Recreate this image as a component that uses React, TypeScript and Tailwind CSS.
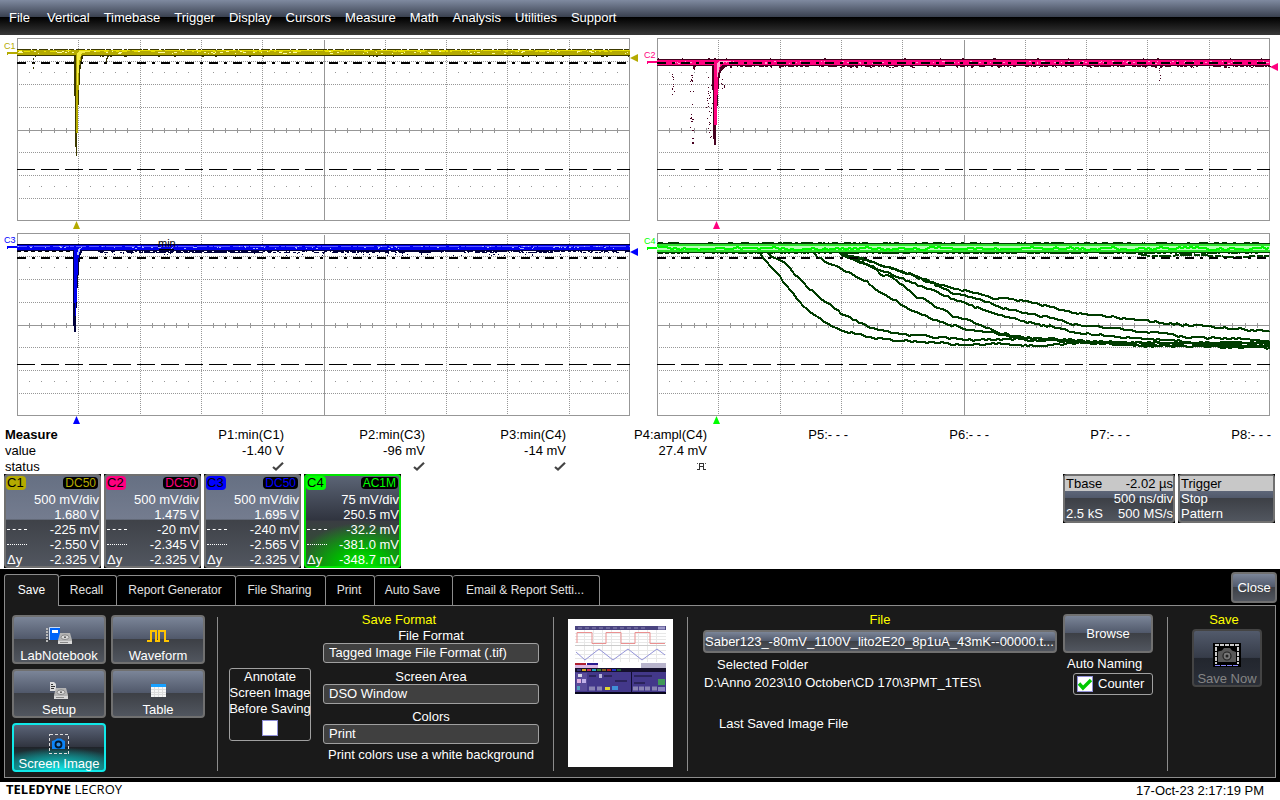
import React from "react";

const MENU = ["File", "Vertical", "Timebase", "Trigger", "Display", "Cursors", "Measure", "Math", "Analysis", "Utilities", "Support"];

const BEVEL =
  "border-2 border-[#707070] rounded-[4px] bg-[linear-gradient(#7b8598,#50586a_49%,#3d4046_50%,#51565f)]";

function rng(seed: number) {
  let s = seed;
  return () => {
    s = (s * 16807) % 2147483647;
    return s / 2147483647;
  };
}

/* Scattered one-row pixels between two rows, as one path */
function specks(seed: number, x0: number, x1: number, y0: number, y1: number, n: number, len = 2) {
  const r = rng(seed);
  let d = "";
  for (let i = 0; i < n; i++) {
    const x = Math.round(x0 + r() * (x1 - x0));
    const y = Math.round(y0 + r() * (y1 - y0));
    const w = 1 + Math.floor(r() * len);
    d += `M${x} ${y}h${w}v1h-${w}z`;
  }
  return d;
}

/* Digitised line through the given points, with one-pixel noise */
function noisy(seed: number, pts: number[][], amp: number) {
  const r = rng(seed);
  let d = "";
  for (let i = 0; i < pts.length - 1; i++) {
    const [ax, ay] = pts[i];
    const [bx, by] = pts[i + 1];
    const n = Math.max(1, Math.round((bx - ax) / 3));
    for (let k = 0; k < n; k++) {
      const t = k / n;
      const x = Math.round(ax + (bx - ax) * t);
      const y = Math.round(ay + (by - ay) * t + (r() - 0.5) * amp);
      d += `${d ? "L" : "M"}${x} ${y}`;
    }
  }
  const [lx, ly] = pts[pts.length - 1];
  return `${d}L${lx} ${ly}`;
}

const third = (pts: number[][]) => pts.map(([x, y]) => [x / 3, y / 3 - 5]);

const DECAYS = [
  [[360, 88], [400, 130], [440, 180], [470, 220], [510, 262], [560, 295], [600, 315], [680, 335], [760, 346], [880, 352], [970, 360], [1060, 357], [1200, 363], [1320, 352], [1500, 362], [1889, 366]],
  [[385, 86], [440, 120], [500, 185], [560, 235], [620, 275], [700, 310], [780, 327], [900, 338], [1000, 345], [1120, 342], [1250, 348], [1450, 355], [1889, 352]],
  [[525, 90], [560, 112], [600, 130], [680, 170], [740, 215], [820, 258], [900, 290], [980, 313], [1060, 325], [1150, 340], [1300, 345], [1500, 360], [1889, 368]],
  [[600, 86], [660, 110], [700, 130], [730, 152], [750, 153], [790, 183], [830, 216], [850, 218], [885, 248], [905, 250], [940, 275], [970, 282], [1020, 298], [1080, 325], [1140, 335], [1300, 350], [1600, 354], [1889, 356]],
  [[600, 86], [680, 118], [780, 158], [880, 197], [960, 230], [1040, 258], [1160, 292], [1240, 305], [1300, 322], [1400, 330], [1500, 342], [1590, 343], [1700, 362], [1889, 361]],
  [[610, 88], [700, 112], [800, 145], [880, 175], [940, 205], [1020, 222], [1080, 248], [1150, 262], [1240, 280], [1300, 298], [1420, 308], [1500, 320], [1560, 322], [1640, 338], [1780, 340], [1889, 350]],
  [[600, 86], [720, 118], [820, 150], [900, 180], [1020, 208], [1060, 218], [1100, 222], [1170, 230], [1260, 255], [1330, 268], [1400, 272], [1470, 285], [1540, 290], [1620, 298], [1700, 305], [1800, 312], [1889, 320]],
].map(third);

const VX = [78, 140, 201, 262, 324, 385, 446, 507, 569];
const HY = [26, 49, 72, 117, 140, 163];
const TX = Array.from({ length: 49 }, (_, i) => i + 1)
  .filter((i) => i % 5 !== 0)
  .map((i) => Math.round(17 + i * 12.24));

function Graticule() {
  let dots = "";
  let ticks = "";
  for (const x of TX) {
    dots += `M${x} 37h1v1h-1zM${x} 151h1v1h-1z`;
    ticks += `M${x} 93h1v5h-1z`;
  }
  return (
    <g shapeRendering="crispEdges">
      <g stroke="#979797" fill="none">
        {VX.map((x) => (
          <path key={x} d={`M${x + 0.5} 5V185`} strokeDasharray={x === 324 ? undefined : "1 1"} />
        ))}
        {HY.map((y) => (
          <path key={y} d={`M19 ${y + 0.5}H629`} strokeDasharray="1 1" />
        ))}
        <path d="M17 95.500H629" />
        <rect x="17.500" y="3.500" width="612" height="182" />
      </g>
      <path d={dots + ticks} fill="#979797" />
    </g>
  );
}

function CursorLines({ fine }: { fine?: boolean }) {
  return (
    <g stroke="#000" shapeRendering="crispEdges" fill="none">
      <path d="M17 28H630" strokeWidth="2" strokeDasharray="9 6 3 6" />
      <path d="M17 134.500H630" strokeDasharray="18 6" />
      {fine && <path d="M17 21.500H76" strokeDasharray="4 3" />}
    </g>
  );
}

function Scope({
  name,
  color,
  ground,
  level,
  marker,
  cursorsOnTop,
  fine,
  children,
}: {
  name: string;
  color: string;
  ground: number;
  level?: number;
  marker: string;
  cursorsOnTop?: boolean;
  fine?: boolean;
  children: React.ReactNode;
}) {
  return (
    <svg viewBox="0 0 640 195" className="block w-full" role="img" aria-label={`${name} trace`}>
      <Graticule />
      {!cursorsOnTop && <CursorLines fine={fine} />}
      <g shapeRendering="crispEdges">{children}</g>
      {cursorsOnTop && <CursorLines />}
      <text x="4" y={ground - 4} fontSize="9" fill={color}>
        {name}
      </text>
      <path d={`M7 ${ground - 1}h10v2h-9v1h-1z`} fill={color} shapeRendering="crispEdges" />
      <path d="M76.500 186L80 194H73Z" fill={color} />
      {level !== undefined && <path d={`M630 ${level}L638 ${level - 4}V${level + 4}Z`} fill={marker} />}
    </svg>
  );
}

function TraceC1() {
  return (
    <>
      <path d="M17 15h613v6H17z" fill="#b4aa00" />
      <path d="M17 14.500H630" stroke="#3c3900" strokeDasharray="14 1 5 2 9 2 3 1" />
      <path d="M17 20.500H630" stroke="#3c3900" />
      <path d="M79 15.500H630" stroke="#e6dc00" strokeDasharray="30 3 18 2" />
      <path d={specks(5, 18, 628, 16, 18, 90, 3)} fill="#fffb9c" />
      <path d={specks(9, 18, 628, 15, 16, 120, 4)} fill="#e8e000" />
      <path d={specks(11, 100, 628, 21, 21, 26)} fill="#3c3900" />
      <path d="M35 21h1v1h-2v3h-1v-2h1v-1h1zM33 28h1v1h-1zM33 32h1v2h-1zM102 21h2v1h-2zM107 21h1v3h-1v3h-1v-4h1z" fill="#3c3900" />
      <path d="M74 20L75 100V112H76V121H77V110L78.500 70L80 40L81 28L84 20Z" fill="#3c3900" />
      <path d="M76 16V98H77.500L78.500 55L79.500 30L82 19L88 16Z" fill="#b4aa00" />
      <path d="M77 50V18L79 16H92L82 18L79 26L78 50" fill="#f4ec40" />
    </>
  );
}

function TraceC2() {
  return (
    <>
      <path d="M17 25h613v6H17z" fill="#ff007f" />
      <path d="M17 24.500H630M17 30.500H630" stroke="#46001f" />
      <path d={specks(21, 18, 628, 26, 28, 110, 2)} fill="#ff9cce" />
      <path d={specks(22, 90, 628, 31, 31, 190, 3)} fill="#46001f" />
      <path d={specks(26, 90, 628, 32, 32, 30, 2)} fill="#46001f" />
      <path d={specks(23, 18, 628, 23, 23, 18, 2)} fill="#46001f" />
      <path d={specks(24, 50, 53, 34, 108, 22, 2)} fill="#46001f" />
      <path d={specks(25, 32, 34, 34, 60, 10, 1)} fill="#46001f" />
      <path d={specks(27, 66, 74, 34, 102, 34, 1)} fill="#46001f" />
      <path d={specks(28, 81, 85, 34, 54, 8, 1)} fill="#46001f" />
      <path d={specks(29, 519, 521, 33, 48, 6, 1)} fill="#46001f" />
      <path d="M53 31h3l-2 6zM72 30L73.500 104L74 110H76V100L78 62L79 46L81 36L85 32L92 30Z" fill="#46001f" />
      <path d="M74 26V90H76.500L77.500 60L78.500 38L81 31L88 26Z" fill="#ff007f" />
      <path d="M77 42V29L79 26H94L81 28L79 33L78 42Z" fill="#ffa4d2" />
    </>
  );
}

function TraceC3() {
  return (
    <>
      <path d="M17 15h613v5H17z" fill="#0000f0" />
      <path d="M17 14.500H630M17 20.500H630" stroke="#00003c" />
      <path d="M17 16.500H630" stroke="#5a5aff" strokeDasharray="10 2 4 1 16 3" />
      <path d={specks(31, 18, 628, 16, 18, 80, 2)} fill="#a8b4ff" />
      <path d={specks(32, 98, 628, 21, 22, 300, 3)} fill="#00003c" />
      <path d={specks(33, 105, 560, 23, 25, 40, 1)} fill="#00003c" />
      <path d={specks(34, 130, 260, 21, 22, 120, 4)} fill="#00003c" />
      <path d={specks(36, 330, 510, 21, 21, 110, 3)} fill="#00003c" />
      <path d="M72.500 20L73 90L74 102H76V88L77.500 58L79 38L80 26L83 20Z" fill="#00003c" />
      <path d="M74 16V60L75 86H76L77.500 45L78.500 28L81 18Z" fill="#0000f0" />
      <path d="M77 25L78 19L82 17L80 20L79 25Z" fill="#a8b4ff" />
      <path d="M159 19.500H174" stroke="#000" />
      <text x="158" y="17" fontSize="11" fill="#000">
        min
      </text>
    </>
  );
}

function TraceC4() {
  const mid = (seed: number) => {
    const pts: number[][] = [];
    const r = rng(seed);
    for (let x = 17; x <= 628; x += 12) pts.push([x, 18 + r() * 3 - 1]);
    pts.push([629, 18]);
    return noisy(seed + 1, pts, 2);
  };
  return (
    <>
      {DECAYS.map((p, i) => (
        <path key={i} d={noisy(50 + i, p, 2)} stroke="#003c00" strokeWidth="2" fill="none" />
      ))}
      <path d="M498 24L510 26L560 25L590 27L629 26" stroke="#003c00" fill="none" strokeWidth="2" strokeDasharray="12 2 6 1" />
      <path d="M17 13h613v10H17z" fill="#64f864" />
      <path d="M17 17.500H630" stroke="#b4ffb4" strokeWidth="5" />
      <path d="M17 15H630M17 21H630" stroke="#30e030" strokeWidth="2" />
      <path d={mid(71)} stroke="#00fa00" strokeWidth="2" fill="none" />
      <path d="M17 13.500H630M17 22.500H630" stroke="#003c00" />
      <path d={specks(61, 18, 626, 12, 12, 100, 6)} fill="#003c00" />
      <path d={specks(62, 18, 626, 23, 23, 220, 4)} fill="#003c00" />
    </>
  );
}

const MEASURES = [
  ["P1:min(C1)", "-1.40 V", "ok"],
  ["P2:min(C3)", "-96 mV", "ok"],
  ["P3:min(C4)", "-14 mV", "ok"],
  ["P4:ampl(C4)", "27.4 mV", "pulse"],
  ["P5:- - -", "", ""],
  ["P6:- - -", "", ""],
  ["P7:- - -", "", ""],
  ["P8:- - -", "", ""],
];

function StatusIcon({ kind }: { kind: string }) {
  if (kind === "ok")
    return (
      <svg viewBox="0 0 12 10" className="ml-auto block h-[10px] w-3" aria-label="valid">
        <path d="M1 5L4 7.500L11 0.800" fill="none" stroke="#444" strokeWidth="2.200" />
      </svg>
    );
  if (kind === "pulse")
    return (
      <svg viewBox="0 0 11 9" className="ml-auto block h-[9px] w-[11px]" aria-label="pulse">
        <path d="M1 7.500H3.500V1.500H7.500V7.500H10M3 4.500H8" fill="none" stroke="#333" shapeRendering="crispEdges" />
        <path d="M1 1.500H2M9 1.500H10" stroke="#555" />
      </svg>
    );
  return null;
}

function MeasureTable() {
  return (
    <table className="mt-[2px] h-[47px] w-full table-fixed border-collapse leading-4 text-black">
      <thead>
        <tr className="h-4">
          <th className="w-[143px] p-0 pl-[5px] text-left font-bold">Measure</th>
          {MEASURES.map(([n]) => (
            <th key={n} className="p-0 text-right font-normal">
              {n}
            </th>
          ))}
          <th className="w-[9px] p-0" />
        </tr>
      </thead>
      <tbody>
        <tr className="h-4">
          <th className="p-0 pl-[5px] text-left font-normal">value</th>
          {MEASURES.map(([n, v]) => (
            <td key={n} className="p-0 text-right">
              {v}
            </td>
          ))}
          <td />
        </tr>
        <tr className="h-[15px]">
          <th className="p-0 pl-[5px] text-left leading-[15px] font-normal">status</th>
          {MEASURES.map(([n, , s]) => (
            <td key={n} className="p-0">
              <StatusIcon kind={s} />
            </td>
          ))}
          <td />
        </tr>
      </tbody>
    </table>
  );
}

const CHANNELS = [
  { n: "C1", tag: "bg-[#b4aa00]", fg: "text-[#b4aa00]", mode: "DC50", v: ["500 mV/div", "1.680 V", "-225 mV", "-2.550 V", "-2.325 V"] },
  { n: "C2", tag: "bg-[#ff007f]", fg: "text-[#ff007f]", mode: "DC50", v: ["500 mV/div", "1.475 V", "-20 mV", "-2.345 V", "-2.325 V"] },
  { n: "C3", tag: "bg-[#0000ff]", fg: "text-[#0000ff]", mode: "DC50", v: ["500 mV/div", "1.695 V", "-240 mV", "-2.565 V", "-2.325 V"] },
  { n: "C4", tag: "bg-[#00ff00]", fg: "text-[#00ff00]", mode: "AC1M", v: ["75 mV/div", "250.5 mV", "-32.2 mV", "-381.0 mV", "-348.7 mV"] },
];

function Descriptor({ c }: { c: (typeof CHANNELS)[number] }) {
  const active = c.n === "C4";
  return (
    <div className="h-[94px] w-[97px] bg-black">
      <button
        className={
          active
            ? "block h-full w-full rounded-[4px] border-2 border-[#00e600] bg-[radial-gradient(ellipse_70%_48%_at_60%_100%,#00f000,#00b800_40%,transparent),linear-gradient(#5b6475,#30343f_49%,#3a3d42_50%,#2c5a2c)] text-left text-white"
            : "block h-full w-full rounded-[4px] border-2 border-[#707070] bg-[linear-gradient(#667083,#747c8f_48%,#3f4248_49%,#51565f)] text-left text-white"
        }
      >
        <span className="flex h-4 items-start justify-between">
          <span className={`${c.tag} h-[14px] w-5 rounded-sm pl-px text-[13px] leading-[14px] text-black`}>{c.n}</span>
          <span className={`${c.fg} mr-px mt-px h-3 rounded-sm bg-black px-[2px] text-[12px] leading-[12px]`}>{c.mode}</span>
        </span>
        {c.v.map((v, i) => (
          <span key={i} className="flex h-[15px] items-center justify-between whitespace-nowrap pl-px leading-[15px]">
            <span className="flex w-5 items-center">
              {i === 2 && <i className="block w-5 border-t border-dashed border-white" />}
              {i === 3 && <i className="block w-5 border-t border-dotted border-white" />}
              {i === 4 && "Δy"}
            </span>
            <span>{v}</span>
          </span>
        ))}
      </button>
    </div>
  );
}

function StatusBoxes() {
  return (
    <div className="flex gap-[3px] leading-[15px]">
      <div className="h-[49px] w-[112px] bg-black">
        <button className={`${BEVEL} block h-full w-full text-left text-white`}>
          <span className="flex h-[15px] justify-between bg-[#c8c8c8] pl-px text-black">
            <span>Tbase</span>
            <span>-2.02 µs</span>
          </span>
          <span className="block text-right">500 ns/div</span>
          <span className="flex justify-between pl-px">
            <span>2.5 kS</span>
            <span>500 MS/s</span>
          </span>
        </button>
      </div>
      <div className="h-[49px] w-[97px] bg-black">
        <button className={`${BEVEL} block h-full w-full text-left text-white`}>
          <span className="block h-[15px] bg-[#c8c8c8] pl-px text-black">Trigger</span>
          <span className="block pl-px">Stop</span>
          <span className="block pl-px">Pattern</span>
        </button>
      </div>
    </div>
  );
}

function Drive({ x }: { x: number }) {
  return (
    <g transform={`translate(${x} 7)`}>
      <path d="M3 0H13L15 7V11H1V7Z" fill="#b4b4b4" />
      <path d="M1 8H15V11H1Z" fill="#d8d8d8" />
      <ellipse cx="8" cy="4.200" rx="4" ry="2.300" fill="#dcdcdc" stroke="#777" strokeWidth="0.800" />
      <circle cx="8" cy="4.200" r="0.900" fill="#444" />
      <path d="M3 9.500H11" stroke="#888" />
    </g>
  );
}

function NotebookIcon() {
  return (
    <svg viewBox="0 0 28 20" className="h-5 w-7">
      <path d="M2 2V16" stroke="#b8b8b8" strokeWidth="2" strokeDasharray="2 1" />
      <path d="M4 2H15V14H4Z" fill="#0064f8" />
      <path d="M4.500 14V1.500H15" fill="none" stroke="#c8dcf8" />
      <rect x="7" y="4" width="6" height="3" fill="#fff" />
      <Drive x={12} />
    </svg>
  );
}

function SetupIcon() {
  return (
    <svg viewBox="0 0 20 18" className="h-[18px] w-5">
      <path d="M1 1H5L7 3V10H1Z" fill="#dcdcdc" />
      <path d="M2 3.500H4M2 5.500H6M2 7.500H5" stroke="#333" />
      <Drive x={4} />
    </svg>
  );
}

function WaveIcon() {
  return (
    <svg viewBox="0 0 22 14" className="h-[14px] w-[22px]" shapeRendering="crispEdges">
      <path d="M0 12H4V2H9V12H12V2H18V12H22" fill="none" stroke="#ffc400" strokeWidth="2" />
    </svg>
  );
}

function TableIcon() {
  return (
    <svg viewBox="0 0 15 13" className="h-[13px] w-[15px]" shapeRendering="crispEdges">
      <rect width="15" height="13" fill="#f6f6f6" />
      <rect width="15" height="3" fill="#18a0ff" />
      <path d="M0 5.500H15M0 8.500H15M0 10.500H15M3.500 3V13M7.500 3V13M11.500 3V13" stroke="#dcdcdc" />
    </svg>
  );
}

function CameraIcon() {
  return (
    <svg viewBox="0 0 20 20" className="h-5 w-5">
      <rect x="0.500" y="0.500" width="19" height="19" fill="none" stroke="#ddd" strokeDasharray="3 2" shapeRendering="crispEdges" />
      <path d="M3 7L6 6L8 4.500H12L14 6L16 7V15H3Z" fill="#0c84f8" />
      <circle cx="9.500" cy="10.500" r="3" fill="#3090e8" stroke="#001830" strokeWidth="1.800" />
    </svg>
  );
}

function SaveNowIcon() {
  return (
    <svg viewBox="0 0 28 24" className="h-6 w-7">
      <g shapeRendering="crispEdges">
        <rect width="28" height="24" fill="#000" />
        <path d="M2 2H26" stroke="#c8c8c8" strokeWidth="2" strokeDasharray="4 1" />
        <path d="M3 4V21M25 4V21" stroke="#c8c8c8" strokeWidth="2" strokeDasharray="4 1" />
        <path d="M2 22.500H26" stroke="#8888ff" strokeDasharray="5 1" />
      </g>
      <path d="M5 8.500L9 7.500L11 5H17L19 7.500L23 9V19H5Z" fill="#585858" />
      <circle cx="14" cy="13" r="4" fill="#777" stroke="#222" strokeWidth="1.200" />
      <circle cx="14" cy="13" r="1.500" fill="#222" />
    </svg>
  );
}

const SAVE_KINDS = [
  { t: "LabNotebook", icon: <NotebookIcon /> },
  { t: "Waveform", icon: <WaveIcon /> },
  { t: "Setup", icon: <SetupIcon /> },
  { t: "Table", icon: <TableIcon /> },
  { t: "Screen Image", icon: <CameraIcon />, on: true },
];

function Thumbnail() {
  const keys = ["#3c3878", "#d0a820", "#c83050", "#20a0c0", "#408030", "#806020", "#b02020", "#2030c0", "#206030"];
  return (
    <svg viewBox="0 0 91 68" className="block h-[68px] w-[91px]" role="img" aria-label="Preview">
      <rect width="91" height="68" fill="#fff" />
      <rect width="91" height="4" fill="#4a4480" />
      <path d="M3 2H72" stroke="#8a86b4" strokeDasharray="4 3" />
      <rect x="83" y="0.500" width="7" height="3" fill="#9c98c8" />
      <path d="M0 7.500H91M0 10.500H91M0 13.500H91M0 16.500H91M0 24.500H91M0 28.500H91M0 32.500H91M9.500 4V36M18.500 4V36M27.500 4V36M36.500 4V36M45.500 4V36M54.500 4V36M63.500 4V36M72.500 4V36M81.500 4V36" stroke="#e8e8e8" />
      <path d="M0 19.500H91" stroke="#ccc" />
      <path d="M2 17V6.500H17V17.500H31V6.500H46V17.500H60V6.500H75V17.500H90" fill="none" stroke="#eb9090" />
      <path d="M1 26L10 34L24 23L38 34L53 23L67 34L82 23L90 29" fill="none" stroke="#9494d8" />
      <rect y="37" width="11" height="2" fill="#b02030" />
      <rect x="12" y="37" width="11" height="2" fill="#2a1c90" />
      <path d="M0 40.500H23" stroke="#dcb8e4" strokeWidth="3" />
      <rect x="66" y="37" width="25" height="5" fill="#b8b4cc" />
      <rect y="42" width="91" height="26" fill="#43388a" />
      <rect x="56" y="42" width="1" height="26" fill="#100c30" />
      <rect y="42" width="91" height="4" fill="#15102c" />
      {keys.map((k, i) => (
        <rect key={k} x={2 + i * 5} y="43" width="4" height="2" fill={k} />
      ))}
      <rect x="1" y="47" width="11" height="18" fill="#5a4c9a" />
      <rect x="3" y="48" width="4" height="3" fill="#d8d8e8" />
      <rect x="2" y="53" width="4" height="4" fill="#e0b0e0" />
      <rect x="7" y="53" width="4" height="4" fill="#c0b0e8" />
      <rect x="2" y="60" width="3" height="4" fill="#50a0c0" />
      <path d="M14 50H21M29 50H37M59 50H77M40 55H52M59 57H70" stroke="#15102c" />
      <rect x="24" y="48" width="3" height="4" fill="#b8b4d8" />
      <path d="M14 62.500H20M22 62.500H27M58 62.500H63M64 62.500H69M70 62.500H75M77 62.500H82" stroke="#8a84b4" strokeWidth="4" />
      <rect x="30" y="61" width="5" height="3" fill="#e0d830" />
      <rect x="37" y="60" width="6" height="4" fill="#4090d8" />
      <rect x="83" y="53" width="7" height="6" fill="#409858" />
      <rect x="83" y="61" width="7" height="4" fill="#8a84c0" />
      <rect y="66" width="91" height="2" fill="#08061c" />
    </svg>
  );
}

function Rule() {
  return <div className="mt-[11px] h-[154px] w-px shrink-0 bg-[#8c8c8c]" />;
}

const TABS = [
  { t: "Recall", w: "w-[58px]" },
  { t: "Report Generator", w: "w-[119px]" },
  { t: "File Sharing", w: "w-[90px]" },
  { t: "Print", w: "w-[49px]" },
  { t: "Auto Save", w: "w-[78px]" },
  { t: "Email & Report Setti...", w: "w-[147px]" },
];

const FIELDS = [
  { l: "File Format", o: "Tagged Image File Format (.tif)", h: "h-[14px]" },
  { l: "Screen Area", o: "DSO Window", h: "h-[21px]" },
  { l: "Colors", o: "Print", h: "h-5" },
];

function Dialog() {
  return (
    <section className="bg-black pt-[3px] text-white">
      <div className="flex h-[33px] justify-between pl-1 pr-[3px]">
        <div className="flex items-end text-[12px]" role="tablist">
          <button role="tab" aria-selected="true" className="z-10 -mb-px h-8 w-[55px] rounded-t-[3px] border border-b-0 border-[#8c8c8c] bg-[#1a1a1a] pb-[2px]">
            Save
          </button>
          {TABS.map(({ t, w }) => (
            <button key={t} role="tab" className={`${w} h-[30px] rounded-t-[3px] border border-b-0 border-l-0 border-[#8c8c8c] bg-black pr-[2px] pb-[2px] whitespace-nowrap text-[#e0e0e0]`}>
              {t}
            </button>
          ))}
        </div>
        <button className={`${BEVEL} h-[31px] w-[46px]`}>Close</button>
      </div>

      <div className="mx-1 flex h-[173px] border border-[#8c8c8c] bg-[#1a1a1a]">
        <div className="ml-[7px] mt-[9px] mr-3 grid shrink-0 grid-cols-2 content-start gap-[5px]">
          {SAVE_KINDS.map(({ t, icon, on }) => (
            <button
              key={t}
              className={
                on
                  ? "flex h-[49px] w-[94px] flex-col items-center justify-end rounded-[4px] border-2 border-[#10e8e8] bg-[radial-gradient(ellipse_75%_50%_at_50%_100%,#10e8e8,#109c9c_45%,transparent),linear-gradient(#5b6478,#30343f_49%,#20242a_50%,#14686a)] leading-[12px] whitespace-nowrap"
                  : `${BEVEL} flex h-[49px] w-[94px] flex-col items-center justify-end leading-[12px]`
              }
            >
              <span className="flex h-7 items-center">{icon}</span>
              <span>{t}</span>
            </button>
          ))}
        </div>
        <Rule />

        <div className="mx-[11px] mt-[62px] shrink-0">
          <label className="flex h-[73px] w-[82px] flex-col items-center rounded-[3px] border border-[#a0a0a0] text-center leading-4 whitespace-nowrap">
            <span>Annotate</span>
            <span>Screen Image</span>
            <span>Before Saving</span>
            <input type="checkbox" className="mt-[3px] block h-4 w-4 appearance-none border border-[#9090d8] bg-white" />
          </label>
        </div>

        <div className="ml-px mt-[5px] mr-[14px] w-[216px] shrink-0">
          <h2 className="w-[152px] text-center leading-[18px] text-[#ffff00]">Save Format</h2>
          {FIELDS.map(({ l, o, h }) => (
            <label key={l} className="block">
              <span className={`${h} flex items-end justify-center leading-[14px]`}>{l}</span>
              <select className="block h-5 w-full appearance-none rounded-[3px] border border-[#a0a0a0] bg-[#404040] px-[5px] leading-[18px]">
                <option>{o}</option>
              </select>
            </label>
          ))}
          <p className="mt-[2px] text-center leading-[18px] whitespace-nowrap">Print colors use a white background</p>
        </div>
        <Rule />

        <div className="mx-[14px] mt-[13px] h-[148px] w-[105px] shrink-0 bg-white p-[7px]">
          <Thumbnail />
        </div>
        <Rule />

        <div className="ml-[15px] mt-[5px] min-w-0 flex-1 leading-[18px]">
          <h2 className="text-center text-[#ffff00]">File</h2>
          <button className={`${BEVEL} mt-px block h-[23px] w-full overflow-hidden text-left leading-[18px] whitespace-nowrap`}>
            Saber123_-80mV_1100V_lito2E20_8p1uA_43mK--00000.t...
          </button>
          <p className="mt-[3px] pl-[14px]">Selected Folder</p>
          <p className="pl-px">D:\Anno 2023\10 October\CD 170\3PMT_1TES\</p>
          <p className="mt-[23px] pl-4">Last Saved Image File</p>
        </div>

        <div className="mt-2 ml-[6px] mr-[14px] w-[90px] shrink-0">
          <button className={`${BEVEL} h-[39px] w-full`}>Browse</button>
          <h3 className="mt-[3px] pl-1 leading-4">Auto Naming</h3>
          <label className="mt-[1px] ml-[10px] flex h-[22px] items-center gap-[5px] rounded-[3px] border border-[#a0a0a0] pl-[3px]">
            <span className="relative flex h-4 w-4">
              <input type="checkbox" defaultChecked className="peer h-4 w-4 appearance-none border border-[#9090d8] bg-white" />
              <svg viewBox="0 0 16 16" className="pointer-events-none absolute inset-0 hidden h-4 w-4 peer-checked:block">
                <path d="M2 7.500L6 12L14 4" fill="none" stroke="#00c800" strokeWidth="3.400" />
              </svg>
            </span>
            Counter
          </label>
        </div>
        <Rule />

        <div className="ml-6 mr-[13px] mt-[5px] w-[70px] shrink-0 text-center">
          <h2 className="pr-[6px] leading-[18px] text-[#ffff00]">Save</h2>
          <button disabled className="flex h-[58px] w-full flex-col items-center justify-end rounded-[4px] border-2 border-[#444] bg-[linear-gradient(#525a6b,#363c49_49%,#22262e_50%,#2b2f38)] leading-[12px] whitespace-nowrap text-[#858585]">
            <span className="flex h-9 items-center">
              <SaveNowIcon />
            </span>
            Save Now
          </button>
        </div>
      </div>
      <div className="h-1" />
    </section>
  );
}

export default function App() {
  return (
    <div className="min-h-screen bg-white font-['Liberation_Sans',Arial,sans-serif] text-[13px] text-black">
      <nav className="flex h-[35px] items-center gap-[14px] bg-[linear-gradient(#7f8aa0,#3a4150_48%,#000_49%,#383838)] pl-[9px] text-white">
        {MENU.map((m) => (
          <a key={m} href="#" className="min-w-6 leading-4">
            {m}
          </a>
        ))}
      </nav>

      <main>
        <div className="grid grid-cols-2">
          <Scope name="C1" color="#b4aa00" ground={18} level={23} marker="#b4aa00">
            <TraceC1 />
          </Scope>
          <Scope name="C2" color="#ff007f" ground={27} level={32} marker="#ff007f" cursorsOnTop>
            <TraceC2 />
          </Scope>
          <Scope name="C3" color="#0000ff" ground={17} level={22} marker="#0000ff" fine>
            <TraceC3 />
          </Scope>
          <Scope name="C4" color="#00ff00" ground={18} marker="#00ff00" cursorsOnTop>
            <TraceC4 />
          </Scope>
        </div>
        <MeasureTable />
        <div className="flex h-[95px] items-start justify-between pl-1 pr-[5px]">
          <div className="flex gap-[3px]">
            {CHANNELS.map((c) => (
              <Descriptor key={c.n} c={c} />
            ))}
          </div>
          <StatusBoxes />
        </div>
        <Dialog />
      </main>

      <footer className="flex h-[18px] justify-between pl-[6px] pr-4">
        <span className="font-['Open_Sans',sans-serif] text-[13px] leading-[14px]">
          <b>TELEDYNE</b> LECROY
        </span>
        <time className="leading-[18px]">17-Oct-23 2:17:19 PM</time>
      </footer>
    </div>
  );
}
